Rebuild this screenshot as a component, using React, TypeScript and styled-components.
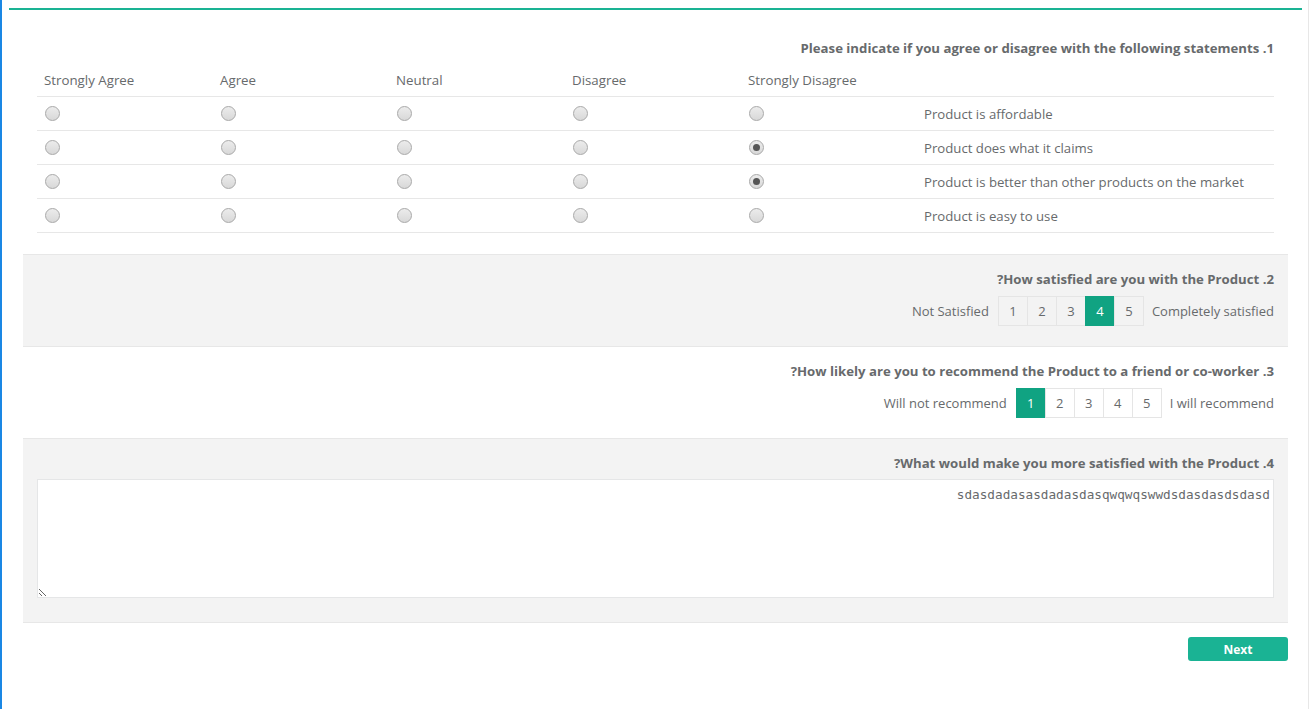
import React from "react";
import { styled, createGlobalStyle } from "styled-components";

const GlobalStyle = createGlobalStyle`
    body {
        margin: 0;
        background: #ffffff;
        font-family: "Open Sans", "Liberation Sans", sans-serif;
        color: #676a6c;
    }
`;

const PageFrame = styled.div`
    width: 1309px;
    min-height: 100vh;
    box-sizing: border-box;
    border-left: 2px solid #1a87e4;
    border-right: 1px solid #e7e7e7;
    padding: 8px 6px 0 7px;
`;

const SurveyBox = styled.div`
    border-top: 2px solid #1ab394;
    padding: 0 14px 40px;
`;

const Section = styled.div<{ $gray?: boolean; $first?: boolean; $last?: boolean }>`
    background: ${({ $gray }) => ($gray ? "#f3f3f3" : "#ffffff")};
    border-top: ${({ $first }) => ($first ? "none" : "1px solid #e7e7e7")};
    border-bottom: ${({ $last }) => ($last ? "1px solid #e7e7e7" : "none")};
    padding: ${({ $first, $last }) =>
        $first ? "28px 14px 21px" : $last ? "14px 14px 24px" : "14px 14px 20px"};
`;

const Title = styled.div`
    font-size: 13.2px;
    font-weight: 700;
    line-height: 20px;
    text-align: right;
    color: #676a6c;
`;

const Grid = styled.div`
    display: grid;
    grid-template-columns: repeat(5, 176px) 1fr;
    margin-top: 2px;
`;

const HeadCell = styled.div`
    font-size: 13.3px;
    line-height: 20px;
    padding: 10px 7px 6px;
    border-bottom: 1px solid #e7e7e7;
`;

const Cell = styled.div`
    display: flex;
    align-items: center;
    height: 33px;
    padding: 0 7px;
    border-bottom: 1px solid #e7e7e7;
    font-size: 13.2px;
`;

const Radio = styled.input`
    appearance: none;
    margin: 0 0 0 1px;
    width: 15px;
    height: 15px;
    border-radius: 50%;
    border: 1px solid #a9a9a9;
    background: linear-gradient(#ececec, #d8d8d8);
    box-sizing: border-box;
    position: relative;
    &:checked::after {
        content: "";
        position: absolute;
        left: 3px;
        top: 3px;
        width: 7px;
        height: 7px;
        border-radius: 50%;
        background: #555555;
    }
`;

const ScaleRow = styled.div`
    display: flex;
    justify-content: flex-end;
    align-items: center;
    margin-top: 7px;
    font-size: 13px;
`;

const ScaleLabel = styled.span`
    margin: 0 8px 0 8px;
    &:first-child {
        margin: 0 9px 0 0;
    }
    &:last-child {
        margin-right: 0;
    }
`;

const ScaleBox = styled.div`
    display: flex;
`;

const ScaleCell = styled.div<{ $active?: boolean }>`
    width: 30px;
    height: 30px;
    box-sizing: border-box;
    display: flex;
    align-items: center;
    justify-content: center;
    border: 1px solid #e5e5e5;
    margin-left: -1px;
    &:first-child {
        margin-left: 0;
    }
    background: ${({ $active }) => ($active ? "#10a382" : "transparent")};
    color: ${({ $active }) => ($active ? "#ffffff" : "#676a6c")};
    border-color: ${({ $active }) => ($active ? "#10a382" : "#e5e5e5")};
`;

const Answer = styled.textarea`
    display: block;
    width: 100%;
    height: 119px;
    margin-top: 6px;
    box-sizing: border-box;
    border: 1px solid #e5e6e7;
    background: #ffffff;
    padding: 7px 3px;
    font-family: "DejaVu Sans Mono", monospace;
    font-size: 12.7px;
    line-height: 16px;
    color: #676a6c;
    outline: none;
`;

const Footer = styled.div`
    display: flex;
    justify-content: flex-end;
    padding-top: 14px;
`;

const NextButton = styled.button`
    width: 100px;
    height: 24px;
    border: none;
    border-radius: 3px;
    background: #1ab394;
    color: #ffffff;
    font-family: "Open Sans", "Liberation Sans", sans-serif;
    font-size: 12px;
    font-weight: 700;
    cursor: pointer;
`;

const choices = ["Strongly Agree", "Agree", "Neutral", "Disagree", "Strongly Disagree"];

const statements = [
    { text: "Product is affordable", picked: -1 },
    { text: "Product does what it claims", picked: 4 },
    { text: "Product is better than other products on the market", picked: 4 },
    { text: "Product is easy to use", picked: -1 },
];

const Scale: React.FC<{ low: string; high: string; value: number }> = ({ low, high, value }) => (
    <ScaleRow>
        <ScaleLabel>{low}</ScaleLabel>
        <ScaleBox>
            {[1, 2, 3, 4, 5].map((n) => (
                <ScaleCell key={n} $active={n === value}>
                    {n}
                </ScaleCell>
            ))}
        </ScaleBox>
        <ScaleLabel>{high}</ScaleLabel>
    </ScaleRow>
);

const App: React.FC = () => {
    return (
        <>
            <GlobalStyle />
            <PageFrame>
                <SurveyBox>
                    <Section $first>
                        <Title>Please indicate if you agree or disagree with the following statements .1</Title>
                        <Grid>
                            {choices.map((c) => (
                                <HeadCell key={c}>{c}</HeadCell>
                            ))}
                            <HeadCell />
                            {statements.map((s, row) => (
                                <React.Fragment key={s.text}>
                                    {choices.map((c, col) => (
                                        <Cell key={c}>
                                            <Radio
                                                type="radio"
                                                name={`q1-${row}`}
                                                defaultChecked={s.picked === col}
                                            />
                                        </Cell>
                                    ))}
                                    <Cell>{s.text}</Cell>
                                </React.Fragment>
                            ))}
                        </Grid>
                    </Section>
                    <Section $gray>
                        <Title>?How satisfied are you with the Product .2</Title>
                        <Scale low="Not Satisfied" high="Completely satisfied" value={4} />
                    </Section>
                    <Section>
                        <Title>?How likely are you to recommend the Product to a friend or co-worker .3</Title>
                        <Scale low="Will not recommend" high="I will recommend" value={1} />
                    </Section>
                    <Section $gray $last>
                        <Title>?What would make you more satisfied with the Product .4</Title>
                        <Answer dir="rtl" defaultValue="sdasdadasasdadasdasqwqwqswwdsdasdasdsdasd" />
                    </Section>
                    <Footer>
                        <NextButton>Next</NextButton>
                    </Footer>
                </SurveyBox>
            </PageFrame>
        </>
    );
};

export default App;
